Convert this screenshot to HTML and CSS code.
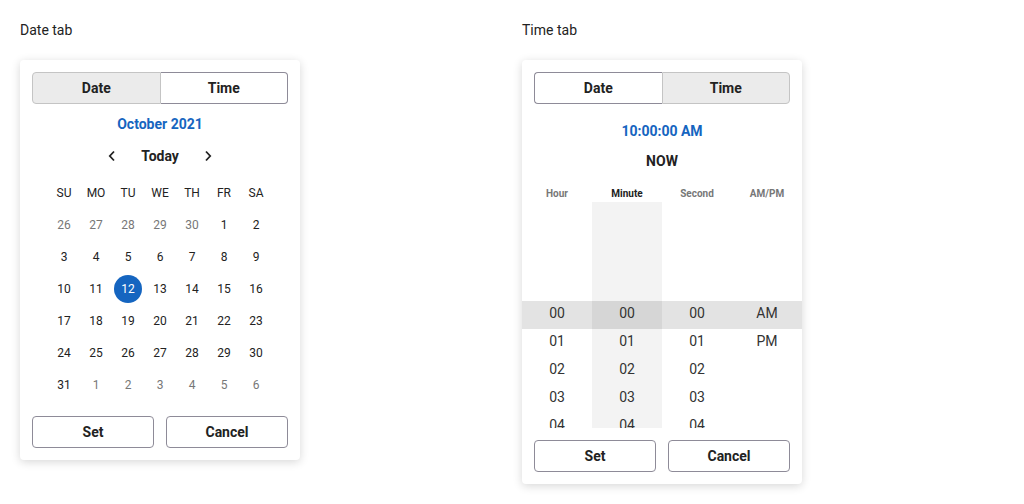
FILE: index.html
```html
<!DOCTYPE html>
<html lang="en">
<head>
    <meta charset="UTF-8" />
    <meta name="viewport" content="width=device-width, initial-scale=1.0"/>
    <title>Date Time Picker</title>
    <link rel="stylesheet" href="styles.css">
</head>
<body>
    <div class="page">
        <!-- Date tab -->
        <section class="demo">
            <div class="demo-label">Date tab</div>
            <div class="picker">
                <div class="tabs">
                    <button class="tab tab-left active">Date</button>
                    <button class="tab tab-right">Time</button>
                </div>
                <div class="title">October 2021</div>
                <div class="nav">
                    <span class="chev">
                        <svg width="8" height="12" viewBox="0 0 8 12"><path d="M6 1.5 L1.8 6 L6 10.5" fill="none" stroke="#222" stroke-width="1.8"/></svg>
                    </span>
                    <span class="today">Today</span>
                    <span class="chev">
                        <svg width="8" height="12" viewBox="0 0 8 12"><path d="M2 1.5 L6.2 6 L2 10.5" fill="none" stroke="#222" stroke-width="1.8"/></svg>
                    </span>
                </div>
                <div class="calendar">
                    <div class="wd">SU</div><div class="wd">MO</div><div class="wd">TU</div><div class="wd">WE</div><div class="wd">TH</div><div class="wd">FR</div><div class="wd">SA</div>

                    <div class="day muted">26</div><div class="day muted">27</div><div class="day muted">28</div><div class="day muted">29</div><div class="day muted">30</div><div class="day">1</div><div class="day">2</div>
                    <div class="day">3</div><div class="day">4</div><div class="day">5</div><div class="day">6</div><div class="day">7</div><div class="day">8</div><div class="day">9</div>
                    <div class="day">10</div><div class="day">11</div><div class="day"><span class="selected">12</span></div><div class="day">13</div><div class="day">14</div><div class="day">15</div><div class="day">16</div>
                    <div class="day">17</div><div class="day">18</div><div class="day">19</div><div class="day">20</div><div class="day">21</div><div class="day">22</div><div class="day">23</div>
                    <div class="day">24</div><div class="day">25</div><div class="day">26</div><div class="day">27</div><div class="day">28</div><div class="day">29</div><div class="day">30</div>
                    <div class="day">31</div><div class="day muted">1</div><div class="day muted">2</div><div class="day muted">3</div><div class="day muted">4</div><div class="day muted">5</div><div class="day muted">6</div>
                </div>
                <div class="actions">
                    <button class="btn">Set</button>
                    <button class="btn">Cancel</button>
                </div>
            </div>
        </section>

        <!-- Time tab -->
        <section class="demo">
            <div class="demo-label">Time tab</div>
            <div class="picker">
                <div class="tabs">
                    <button class="tab tab-left">Date</button>
                    <button class="tab tab-right active">Time</button>
                </div>
                <div class="time-title">10:00:00 AM</div>
                <div class="now">NOW</div>
                <div class="time-head">
                    <div>Hour</div>
                    <div class="current">Minute</div>
                    <div>Second</div>
                    <div>AM/PM</div>
                </div>
                <div class="time-cols">
                    <div class="col">
                        <div class="item sel">00</div><div class="item">01</div><div class="item">02</div><div class="item">03</div><div class="item">04</div>
                    </div>
                    <div class="col col-focus">
                        <div class="item sel">00</div><div class="item">01</div><div class="item">02</div><div class="item">03</div><div class="item">04</div>
                    </div>
                    <div class="col">
                        <div class="item sel">00</div><div class="item">01</div><div class="item">02</div><div class="item">03</div><div class="item">04</div>
                    </div>
                    <div class="col">
                        <div class="item sel">AM</div><div class="item">PM</div>
                    </div>
                </div>
                <div class="actions">
                    <button class="btn">Set</button>
                    <button class="btn">Cancel</button>
                </div>
            </div>
        </section>
    </div>
</body>
</html>
```

FILE: styles.css
```css
body {
    margin: 0;
    padding: 20px;
    font-family: Roboto, "Liberation Sans", Arial, sans-serif;
    color: #222222;
    background: #ffffff;
}
.page {
    display: flex;
}
.demo {
    flex: none;
    width: 502px;
}
.demo:last-child {
    width: 482px;
}
.demo-label {
    font-size: 14px;
    line-height: 20px;
    margin-bottom: 20px;
}
.picker {
    width: 280px;
    box-sizing: border-box;
    padding: 12px;
    background: #ffffff;
    border-radius: 4px;
    box-shadow: 0 2px 10px rgba(0, 0, 0, 0.16);
}
button {
    font-family: inherit;
}
.tabs {
    display: flex;
}
.tab {
    flex: 1;
    height: 32px;
    margin: 0;
    padding: 0;
    font-size: 14px;
    font-weight: bold;
    color: #222222;
    background: #ffffff;
    border: 1px solid #8e8b98;
}
.tab.active {
    background: #ebebeb;
    border-color: #c4c4c4;
}
.tab-left {
    border-radius: 4px 0 0 4px;
}
.tab-right {
    border-radius: 0 4px 4px 0;
    border-left: none;
}
.tab-left.active {
    border-right: 1px solid #c4c4c4;
}
.tab-right.active {
    border-left: 1px solid #c4c4c4;
}
.tab-left:not(.active) {
    border-right: none;
}
.title {
    margin-top: 8px;
    height: 24px;
    line-height: 24px;
    text-align: center;
    font-size: 14px;
    font-weight: bold;
    color: #1565c0;
}
.nav {
    margin-top: 4px;
    height: 32px;
    display: flex;
    justify-content: center;
    align-items: center;
}
.chev {
    width: 32px;
    display: flex;
    justify-content: center;
    align-items: center;
}
.today {
    width: 64px;
    text-align: center;
    font-size: 14px;
    font-weight: bold;
}
.calendar {
    margin: 5px auto 0;
    width: 224px;
    display: grid;
    grid-template-columns: repeat(7, 32px);
    grid-auto-rows: 32px;
}
.wd, .day {
    display: flex;
    justify-content: center;
    align-items: center;
    font-size: 12px;
    color: #222222;
}
.day.muted {
    color: #777777;
}
.selected {
    width: 28px;
    height: 28px;
    border-radius: 50%;
    background: #1565c0;
    color: #ffffff;
    display: flex;
    justify-content: center;
    align-items: center;
}
.actions {
    display: flex;
    gap: 12px;
    margin-top: 15px;
}
.btn {
    flex: 1;
    height: 32px;
    background: #ffffff;
    border: 1px solid #8e8b98;
    border-radius: 4px;
    font-size: 14px;
    font-weight: bold;
    color: #222222;
}
.time-title {
    margin-top: 15px;
    height: 24px;
    line-height: 24px;
    text-align: center;
    font-size: 14px;
    font-weight: bold;
    color: #1565c0;
}
.now {
    margin-top: 6px;
    height: 24px;
    line-height: 24px;
    text-align: center;
    font-size: 14px;
    font-weight: bold;
}
.time-head {
    margin: 11px -12px 0;
    display: grid;
    grid-template-columns: repeat(4, 1fr);
    height: 18px;
    line-height: 20px;
    font-size: 10px;
    font-weight: bold;
    color: #777777;
    text-align: center;
}
.time-head .current {
    color: #222222;
}
.time-cols {
    margin: 0 -12px;
    display: grid;
    grid-template-columns: repeat(4, 1fr);
    height: 226px;
    overflow: hidden;
}
.col {
    padding-top: 99px;
}
.col-focus {
    background: #f3f3f3;
}
.item {
    height: 28px;
    line-height: 25px;
    text-align: center;
    font-size: 14px;
    color: #333333;
}
.item.sel {
    background: #e3e3e3;
}
.col-focus .item.sel {
    background: #d6d6d6;
}
.time-cols + .actions {
    margin-top: 12px;
}
```
